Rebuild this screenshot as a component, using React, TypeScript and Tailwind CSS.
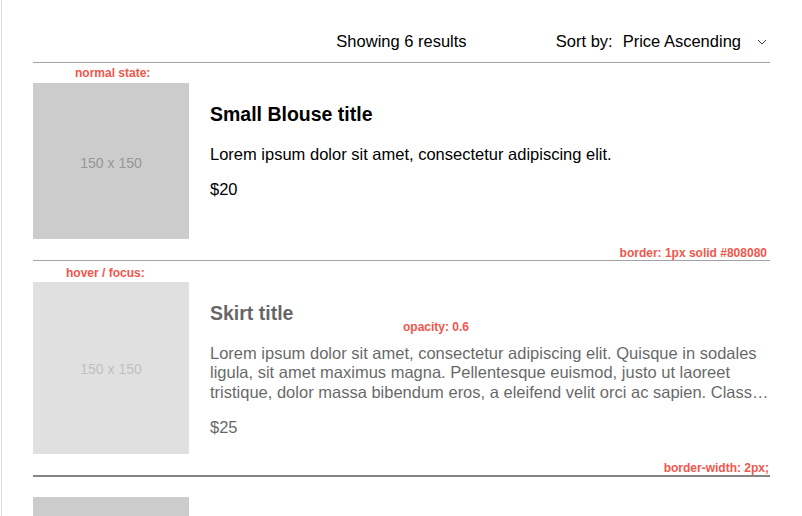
import React from "react";

const items = [
  {
    id: 1,
    title: "Small Blouse title",
    desc: "Lorem ipsum dolor sit amet, consectetur adipiscing elit.",
    price: "$20",
    state: "normal",
  },
  {
    id: 2,
    title: "Skirt title",
    desc: "Lorem ipsum dolor sit amet, consectetur adipiscing elit. Quisque in sodales ligula, sit amet maximus magna. Pellentesque euismod, justo ut laoreet tristique, dolor massa bibendum eros, a eleifend velit orci ac sapien. Class aptent taciti sociosqu ad litora torquent per conubia nostra, per inceptos himenaeos.",
    price: "$25",
    state: "hover",
  },
  {
    id: 3,
    title: "Jacket title",
    desc: "Lorem ipsum dolor sit amet, consectetur adipiscing elit.",
    price: "$40",
    state: "normal",
  },
];

const note = "absolute text-[12px] font-bold leading-[14px] text-[#f0574c] whitespace-nowrap";

export default function App() {
  return (
    <div className="min-h-[516px] bg-white ml-px border-l border-[#dcdcdc] pl-[31px] pr-[32px] font-['Liberation_Sans',Arial,sans-serif] text-black">
      {/* toolbar */}
      <div className="grid grid-cols-3 items-center pt-[32px] pb-[11px] border-b border-[#a3a3a3] text-[16.5px] leading-[19px]">
        <div />
        <div className="text-center">Showing 6 results</div>
        <div className="flex items-center justify-end">
          <span>Sort by:</span>
          <span className="ml-[10px]">Price Ascending</span>
          <svg className="ml-[16px] mr-[3px]" width="10" height="6" viewBox="0 0 10 6" fill="none">
            <polyline points="1,1 5,5 9,1" stroke="#444" strokeWidth="1" />
          </svg>
        </div>
      </div>

      {items.map((item, i) => {
        const hover = item.state === "hover";
        return (
          <div
            key={item.id}
            className={`relative pb-[21px] ${hover ? "pt-[21px] border-b-2 border-[#858585]" : "pt-5 border-b border-[#a3a3a3]"}`}
          >
            <div className={`flex gap-[21px] ${hover ? "opacity-60" : ""}`}>
              <div className="w-[156px] min-h-[156px] shrink-0 bg-[#cccccc] flex items-center justify-center pt-[4px] text-[14px] text-[#969696]">
                150 x 150
              </div>
              <div className="flex-1 min-w-0 pb-4">
                <h2 className="mt-5 text-[19.5px] leading-[23px] font-bold">{item.title}</h2>
                <p className="mt-[19px] text-[16.5px] leading-[19.4px] line-clamp-3">{item.desc}</p>
                <p className="mt-4 text-[16.5px] leading-[19.4px]">{item.price}</p>
              </div>
            </div>

            {i === 0 && (
              <>
                <span className={`${note} top-[3px] left-[42px]`}>normal state:</span>
                <span className={`${note} bottom-0 right-[3px]`}>border: 1px solid #808080</span>
              </>
            )}
            {hover && (
              <>
                <span className={`${note} top-[5px] left-[33px]`}>hover / focus:</span>
                <span className={`${note} top-[59px] left-[370px]`}>opacity: 0.6</span>
                <span className={`${note} bottom-0 right-[1px]`}>border-width: 2px;</span>
              </>
            )}
          </div>
        );
      })}
    </div>
  );
}
